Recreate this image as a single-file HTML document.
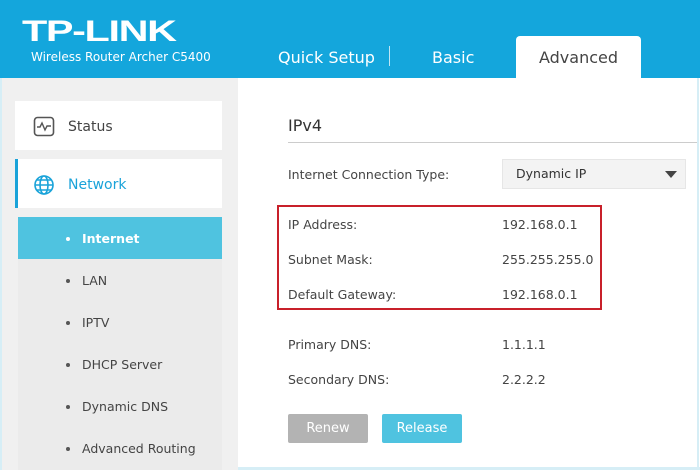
<!DOCTYPE html>
<html><head><style>
*{margin:0;padding:0;box-sizing:border-box}
body{width:700px;height:470px;overflow:hidden;background:#fff;font-family:"DejaVu Sans","Liberation Sans",sans-serif;position:relative}
.hdr{position:absolute;left:0;top:0;width:700px;height:78px;background:#14a6dc}
.logo{position:absolute;left:22px;top:15px;color:#fff;font-family:"Liberation Sans",sans-serif;font-weight:bold;font-size:30px;letter-spacing:-1px;transform:scaleX(1.38);transform-origin:left}
.sub{position:absolute;left:31px;top:50px;color:#fff;font-size:12px}
.tab{position:absolute;color:#fff;font-size:16px;top:48px}
.adv{position:absolute;left:516px;top:36px;width:125px;height:42px;background:#fff;border-radius:4px 4px 0 0;color:#444;font-size:16px;text-align:center;line-height:44px}
.side{position:absolute;left:0;top:78px;width:238px;height:392px;background:#f0f0f0;border-left:2px solid #d6eef6}
.card{position:absolute;left:15px;width:207px;height:49px;background:#fff;font-size:14px;color:#444}
.card span{position:absolute;left:53px;top:18px}
.it{position:absolute;left:18px;width:204px;height:42px;background:#ebebeb;font-size:12.5px;color:#444}
.it b{position:absolute;left:48px;top:20px;width:4px;height:4px;border-radius:50%;background:#555}
.it span{position:absolute;left:64px;top:14px}
.lbl{position:absolute;left:288px;font-size:12.5px;color:#444}
.val{position:absolute;left:502px;font-size:12.5px;color:#444}
</style></head><body>
<div class="hdr">
<div class="logo">TP-LINK</div>
<div class="sub">Wireless Router Archer C5400</div>
<div class="tab" style="left:278px">Quick Setup</div>
<div style="position:absolute;left:389px;top:46px;width:1px;height:20px;background:#bfe6f5"></div>
<div class="tab" style="left:432px">Basic</div>
<div class="adv">Advanced</div>
</div>
<div class="side"></div>
<div class="card" style="top:101px"><svg style="position:absolute;left:18px;top:15px" width="22" height="22" viewBox="0 0 22 22"><rect x="1.5" y="1.5" width="19" height="18" rx="3" fill="none" stroke="#555" stroke-width="1.6"/><path d="M4 11h3l2-4 3 7 2-4h4" fill="none" stroke="#555" stroke-width="1.4"/></svg><span>Status</span></div>
<div class="card" style="top:159px;border-left:3px solid #1aa3d9"><svg style="position:absolute;left:15px;top:15px" width="22" height="22" viewBox="0 0 22 22" fill="none" stroke="#1aa3d9" stroke-width="1.6"><circle cx="11" cy="11" r="9"/><ellipse cx="11" cy="11" rx="4" ry="9"/><path d="M2 11h18M4 6h14M4 16h14"/></svg><span style="color:#1aa3d9;left:50px">Network</span></div>
<div class="it" style="top:217px;background:#4fc3e0;color:#fff"><b style="background:#fff"></b><span style="font-weight:bold">Internet</span></div>
<div class="it" style="top:259px"><b></b><span>LAN</span></div>
<div class="it" style="top:301px"><b></b><span>IPTV</span></div>
<div class="it" style="top:343px"><b></b><span>DHCP Server</span></div>
<div class="it" style="top:385px"><b></b><span>Dynamic DNS</span></div>
<div class="it" style="top:427px;height:43px"><b></b><span>Advanced Routing</span></div>
<div style="position:absolute;left:697px;top:78px;width:2px;height:392px;background:#d6eef6"></div>
<div style="position:absolute;left:238px;top:467px;width:462px;height:3px;background:#d6eef6"></div>
<div style="position:absolute;left:288px;top:116px;font-size:16px;color:#333">IPv4</div>
<div style="position:absolute;left:288px;top:142px;width:409px;height:1px;background:#ccc"></div>
<div class="lbl" style="top:167px">Internet Connection Type:</div>
<div style="position:absolute;left:502px;top:159px;width:184px;height:30px;background:#f3f3f3;border:1px solid #e6e6e6"><span style="position:absolute;left:13px;top:6px;font-size:12.5px;color:#333">Dynamic IP</span><span style="position:absolute;right:8px;top:11px;border-left:6px solid transparent;border-right:6px solid transparent;border-top:7px solid #444"></span></div>
<div style="position:absolute;left:277px;top:205px;width:325px;height:105px;border:2px solid #c8202a"></div>
<div class="lbl" style="top:217px">IP Address:</div><div class="val" style="top:217px">192.168.0.1</div>
<div class="lbl" style="top:252px">Subnet Mask:</div><div class="val" style="top:252px">255.255.255.0</div>
<div class="lbl" style="top:287px">Default Gateway:</div><div class="val" style="top:287px">192.168.0.1</div>
<div class="lbl" style="top:337px">Primary DNS:</div><div class="val" style="top:337px">1.1.1.1</div>
<div class="lbl" style="top:372px">Secondary DNS:</div><div class="val" style="top:372px">2.2.2.2</div>
<div style="position:absolute;left:288px;top:414px;width:80px;height:29px;background:#b3b3b3;border-radius:2px;color:#fff;font-size:13px;text-align:center;line-height:29px">Renew</div>
<div style="position:absolute;left:382px;top:414px;width:80px;height:29px;background:#4fc3e0;border-radius:2px;color:#fff;font-size:13px;text-align:center;line-height:29px">Release</div>
</body></html>
